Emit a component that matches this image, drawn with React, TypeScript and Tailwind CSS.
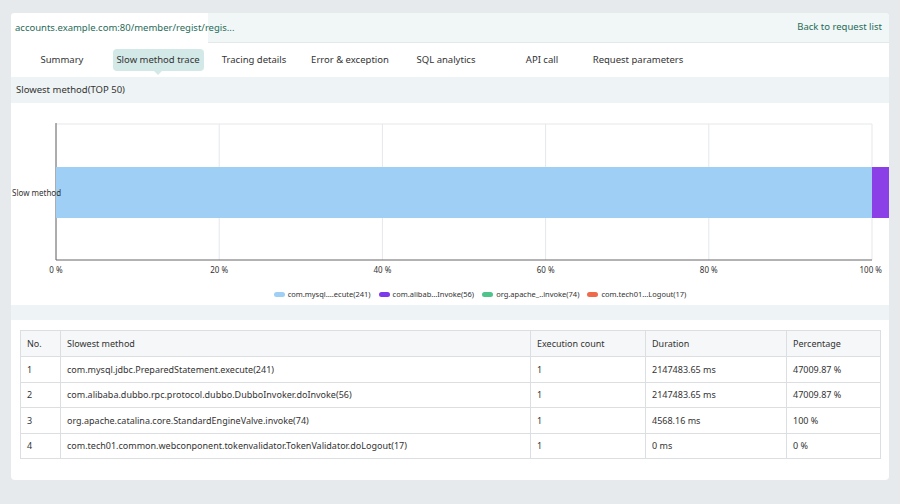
const tabs = ['Summary', 'Slow method trace', 'Tracing details', 'Error & exception', 'SQL analytics', 'API call', 'Request parameters'];

const rows = [
  ['1', 'com.mysql.jdbc.PreparedStatement.execute(241)', '1', '2147483.65 ms', '47009.87 %'],
  ['2', 'com.alibaba.dubbo.rpc.protocol.dubbo.DubboInvoker.doInvoke(56)', '1', '2147483.65 ms', '47009.87 %'],
  ['3', 'org.apache.catalina.core.StandardEngineValve.invoke(74)', '1', '4568.16 ms', '100 %'],
  ['4', 'com.tech01.common.webconponent.tokenvalidator.TokenValidator.doLogout(17)', '1', '0 ms', '0 %'],
];

const legend = [
  ['#9fcff5', 'com.mysql....ecute(241)'],
  ['#7c3aed', 'com.alibab...Invoke(56)'],
  ['#4fc48a', 'org.apache_..invoke(74)'],
  ['#ee6a4a', 'com.tech01...Logout(17)'],
];

function Chart() {
  const x0 = 45, w = 816;
  return (
    <svg width="878" height="180" className="block">
      {[0, 1, 2, 3, 4, 5].map((k) => (
        <line key={k} x1={x0 + (w / 5) * k} x2={x0 + (w / 5) * k} y1={21} y2={157} stroke="#e5e7eb" />
      ))}
      <line x1={x0} x2={x0 + w} y1={21} y2={21} stroke="#e5e7eb" />
      <line x1={x0} x2={x0} y1={20} y2={157} stroke="#666" />
      <line x1={x0} x2={x0 + w} y1={157} y2={157} stroke="#666" />
      <rect x={x0} y={64} width={w} height={51} fill="#9fcff5" />
      <rect x={x0 + w} y={64} width={17} height={51} fill="#8b3fe6" />
      <text x={1} y={93} fontSize="8" fill="#333">Slow method</text>
      {[0, 20, 40, 60, 80, 100].map((p, k) => (
        <text key={p} x={x0 + (w / 5) * k} y={170} fontSize="8" fill="#333" textAnchor={k === 5 ? 'end' : 'middle'} dx={k === 5 ? 10 : 0}>{p} %</text>
      ))}
    </svg>
  );
}

export default function App() {
  return (
    <div className="w-[900px] h-[504px] bg-[#e7eaed] pt-[13px] px-[11px] font-['Roboto',sans-serif] text-[#333]">
      <div className="bg-white h-[467px] rounded-sm overflow-hidden">
        <div className="flex h-[30px] bg-[#f1f6f6] border-b border-[#e3e8ea]">
          <div className="w-[197px] bg-white flex items-center pl-[4px] text-[9.5px] text-[#1f6b58] -mb-px">accounts.example.com:80/member/regist/regis...</div>
          <div className="flex-1" />
          <div className="flex items-center pr-[7px] text-[9.5px] text-[#1f6b58]">Back to request list</div>
        </div>
        <div className="flex h-[34px] items-center pl-[3px]">
          {tabs.map((t, i) => (
            <div key={t} className="w-[96px] flex justify-center">
              <div className={`relative text-[9.5px] h-[22px] flex items-center justify-center ${i === 1 ? 'w-[91px] bg-[#d3e9e7] rounded-sm' : ''}`}>
                {t}
                {i === 1 && <span className="absolute -bottom-[4px] left-1/2 -ml-[4px] w-0 h-0 border-l-4 border-r-4 border-t-4 border-l-transparent border-r-transparent border-t-[#d3e9e7]" />}
              </div>
            </div>
          ))}
        </div>
        <div className="h-[26px] bg-[#eef3f5] flex items-center pl-[5px] text-[9.5px]">Slowest method(TOP 50)</div>
        <div className="h-[202px]">
          <Chart />
          <div className="flex justify-center gap-[8px] pl-[60px] mt-[6px]">
            {legend.map(([c, l]) => (
              <div key={l} className="flex items-center gap-[3px] text-[7.5px]">
                <span className="w-[11px] h-[5px] rounded-full" style={{ background: c }} />
                {l}
              </div>
            ))}
          </div>
        </div>
        <div className="h-[15px] bg-[#eef3f5]" />
        <div className="px-[9px] pt-[10px]">
          <table className="w-[861px] border-collapse text-[9px]">
            <colgroup>
              <col className="w-[40px]" />
              <col className="w-[470px]" />
              <col className="w-[115px]" />
              <col className="w-[141px]" />
              <col />
            </colgroup>
            <thead>
              <tr className="h-[26px] bg-[#f6f7f8]">
                {['No.', 'Slowest method', 'Execution count', 'Duration', 'Percentage'].map((h) => (
                  <th key={h} className="border border-[#dcdfe2] text-left font-normal px-[6px]">{h}</th>
                ))}
              </tr>
            </thead>
            <tbody>
              {rows.map((r) => (
                <tr key={r[0]} className="h-[25.5px]">
                  {r.map((c, j) => (
                    <td key={j} className="border border-[#dcdfe2] px-[6px]">{c}</td>
                  ))}
                </tr>
              ))}
            </tbody>
          </table>
        </div>
      </div>
    </div>
  );
}
